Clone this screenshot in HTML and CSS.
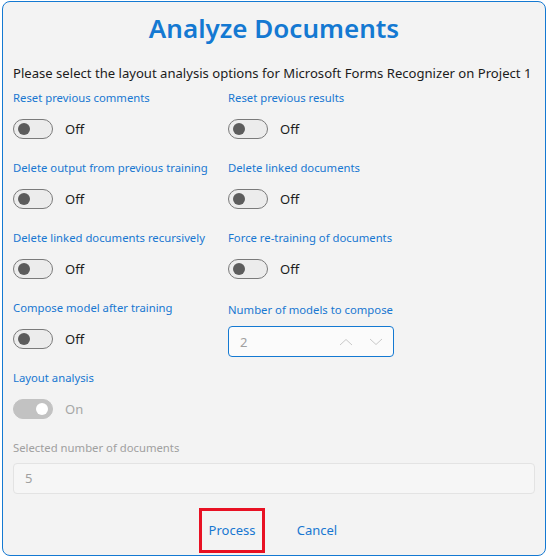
FILE: index.html
```html
<!DOCTYPE html>
<html lang="en">
<head>
<meta charset="utf-8">
<title>Analyze Documents</title>
<link rel="stylesheet" href="styles.css">
</head>
<body>
<div class="dialog">
  <h1 class="title">Analyze Documents</h1>
  <p class="desc">Please select the layout analysis options for Microsoft Forms Recognizer on Project 1</p>
  <div class="grid">
    <div class="field">
      <div class="label">Reset previous comments</div>
      <div class="toggle-row"><span class="toggle"><span class="knob"></span></span><span class="state">Off</span></div>
    </div>
    <div class="field">
      <div class="label">Reset previous results</div>
      <div class="toggle-row"><span class="toggle"><span class="knob"></span></span><span class="state">Off</span></div>
    </div>
    <div class="field">
      <div class="label">Delete output from previous training</div>
      <div class="toggle-row"><span class="toggle"><span class="knob"></span></span><span class="state">Off</span></div>
    </div>
    <div class="field">
      <div class="label">Delete linked documents</div>
      <div class="toggle-row"><span class="toggle"><span class="knob"></span></span><span class="state">Off</span></div>
    </div>
    <div class="field">
      <div class="label">Delete linked documents recursively</div>
      <div class="toggle-row"><span class="toggle"><span class="knob"></span></span><span class="state">Off</span></div>
    </div>
    <div class="field">
      <div class="label">Force re-training of documents</div>
      <div class="toggle-row"><span class="toggle"><span class="knob"></span></span><span class="state">Off</span></div>
    </div>
    <div class="field">
      <div class="label">Compose model after training</div>
      <div class="toggle-row"><span class="toggle"><span class="knob"></span></span><span class="state">Off</span></div>
    </div>
    <div class="field field-spin">
      <div class="label">Number of models to compose</div>
      <div class="spin">
        <span class="spin-value">2</span>
        <span class="spin-btns">
          <svg width="14" height="8" viewBox="0 0 14 8"><path d="M1 7 L7 1.5 L13 7" fill="none" stroke="#c9c9c9" stroke-width="1"/></svg>
          <svg width="14" height="8" viewBox="0 0 14 8"><path d="M1 1 L7 6.5 L13 1" fill="none" stroke="#c9c9c9" stroke-width="1"/></svg>
        </span>
      </div>
    </div>
    <div class="field">
      <div class="label">Layout analysis</div>
      <div class="toggle-row"><span class="toggle toggle-on-disabled"><span class="knob"></span></span><span class="state state-disabled">On</span></div>
    </div>
  </div>
  <div class="doc-field">
    <div class="label label-disabled">Selected number of documents</div>
    <div class="input-disabled">5</div>
  </div>
  <div class="actions">
    <button class="btn btn-focus">Process</button>
    <button class="btn">Cancel</button>
  </div>
</div>
</body>
</html>
```

FILE: styles.css
```css
html, body {
  margin: 0;
  padding: 0;
  background: #ffffff;
}

body {
  font-family: "Noto Sans", "Open Sans", sans-serif;
  width: 548px;
  height: 560px;
  overflow: hidden;
}

.dialog {
  box-sizing: border-box;
  margin: 1px 0 0 2px;
  width: 544px;
  height: 555px;
  border: 1px solid #1479d2;
  border-radius: 8px;
  background: #f3f3f3;
  padding: 0 10px;
  display: flex;
  flex-direction: column;
}

.title {
  margin: 8px 0 0;
  height: 36px;
  line-height: 36px;
  font-size: 26px;
  font-weight: 600;
  color: #1479d2;
  text-align: center;
}

.desc {
  margin: 17px 0 0;
  height: 20px;
  line-height: 20px;
  font-size: 13.1px;
  color: #1b1b1b;
  white-space: nowrap;
}

.grid {
  margin-top: 7px;
  display: grid;
  grid-template-columns: 215px 1fr;
  grid-auto-rows: 70px;
}

.field {
  display: flex;
  flex-direction: column;
}

.label {
  height: 16px;
  line-height: 16px;
  font-size: 11.3px;
  color: #1877d1;
  white-space: nowrap;
}

.label-disabled {
  color: #a0a0a0;
}

.toggle-row {
  margin-top: 13px;
  display: flex;
  align-items: center;
  height: 20px;
}

.toggle {
  box-sizing: border-box;
  width: 40px;
  height: 20px;
  border: 1px solid #7a7a7a;
  border-radius: 10px;
  background: #ececec;
  display: flex;
  align-items: center;
  padding: 0 4px;
}

.knob {
  width: 12px;
  height: 12px;
  border-radius: 50%;
  background: #5c5c5c;
}

.toggle-on-disabled {
  border-color: #c2c2c2;
  background: #c2c2c2;
  justify-content: flex-end;
}

.toggle-on-disabled .knob {
  background: #ffffff;
}

.state {
  margin-left: 12px;
  font-size: 13px;
  color: #1b1b1b;
}

.state-disabled {
  color: #a6a6a6;
}

.field-spin {
  padding-top: 2px;
}

.spin {
  box-sizing: border-box;
  margin-top: 8px;
  width: 166px;
  height: 31px;
  border: 1px solid #1479d2;
  border-radius: 4px;
  background: #fbfbfb;
  display: flex;
  align-items: center;
  padding: 0 10px 0 11px;
}

.spin-value {
  flex: 1;
  font-size: 13px;
  color: #a0a0a0;
}

.spin-btns {
  display: flex;
  gap: 16px;
  align-items: center;
}

.spin-btns svg {
  display: block;
}

.doc-field {
  display: flex;
  flex-direction: column;
}

.input-disabled {
  box-sizing: border-box;
  margin-top: 7px;
  height: 31px;
  line-height: 29px;
  border: 1px solid #e3e3e3;
  border-radius: 4px;
  background: #f6f6f6;
  padding: 0 11px;
  font-size: 13px;
  color: #a0a0a0;
}

.actions {
  margin-top: 14px;
  display: flex;
  justify-content: center;
  gap: 19px;
  padding-left: 1px;
}

.btn {
  box-sizing: border-box;
  width: 66px;
  height: 45px;
  border: 3px solid transparent;
  background: transparent;
  font-family: "Noto Sans", "Open Sans", sans-serif;
  font-size: 13px;
  color: #1877d1;
  padding: 0 0 2px;
}

.btn-focus {
  border-color: #e81123;
}
```
